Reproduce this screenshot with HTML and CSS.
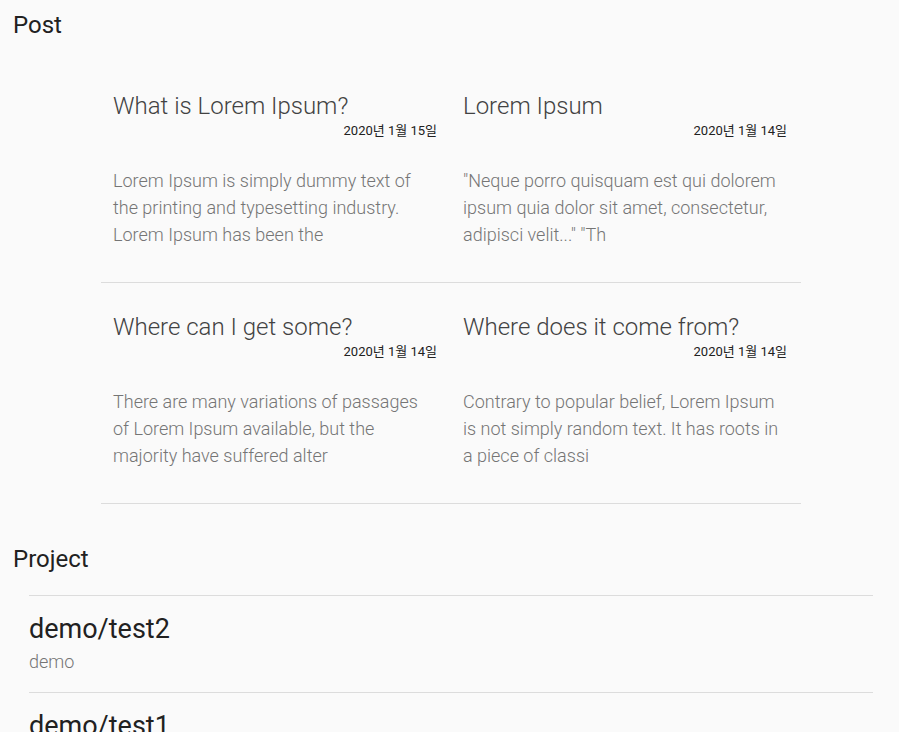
FILE: index.html
```html
<!DOCTYPE html>
<html lang="ko">
<head>
<meta charset="utf-8">
<title>Post</title>
<link rel="stylesheet" href="styles.css">
</head>
<body>
<main class="page">
  <h2 class="section-title">Post</h2>
  <div class="posts">
    <article class="post">
      <h3 class="post-title">What is Lorem Ipsum?</h3>
      <div class="post-date">2020년 1월 15일</div>
      <p class="post-body">Lorem Ipsum is simply dummy text of the printing and typesetting industry. Lorem Ipsum has been the</p>
    </article>
    <article class="post">
      <h3 class="post-title">Lorem Ipsum</h3>
      <div class="post-date">2020년 1월 14일</div>
      <p class="post-body">"Neque porro quisquam est qui dolorem ipsum quia dolor sit amet, consectetur, adipisci velit..." "Th</p>
    </article>
    <article class="post">
      <h3 class="post-title">Where can I get some?</h3>
      <div class="post-date">2020년 1월 14일</div>
      <p class="post-body">There are many variations of passages of Lorem Ipsum available, but the majority have suffered alter</p>
    </article>
    <article class="post">
      <h3 class="post-title">Where does it come from?</h3>
      <div class="post-date">2020년 1월 14일</div>
      <p class="post-body">Contrary to popular belief, Lorem Ipsum is not simply random text. It has roots in a piece of classi</p>
    </article>
  </div>
  <h2 class="section-title project-heading">Project</h2>
  <ul class="projects">
    <li class="project">
      <div class="project-name">demo/test2</div>
      <div class="project-owner">demo</div>
    </li>
    <li class="project">
      <div class="project-name">demo/test1</div>
      <div class="project-owner">demo</div>
    </li>
  </ul>
</main>
</body>
</html>
```
FILE: styles.css
```css
html, body {
  margin: 0;
  padding: 0;
  background: #fafafa;
}
body {
  font-family: Roboto, "Noto Sans CJK KR", sans-serif;
  color: #212121;
  overflow: hidden;
}
.page {
  padding: 0 13px;
}
.section-title {
  margin: 0;
  font-size: 24px;
  font-weight: 400;
  line-height: 50px;
  color: #212121;
}
.posts {
  display: grid;
  grid-template-columns: 350px 350px;
  width: 700px;
  margin: 12px 0 0 88px;
}
.post {
  padding: 28px 14px 34px 12px;
  border-bottom: 1px solid #dcdcdc;
}
.post-title {
  margin: 0;
  font-size: 24px;
  font-weight: 300;
  line-height: 32px;
  color: #424242;
}
.post-date {
  text-align: right;
  font-family: Roboto, "Noto Sans CJK KR", sans-serif;
  font-size: 13px;
  line-height: 18px;
  color: #212121;
}
.post-body {
  margin: 27px 0 0 0;
  font-size: 18px;
  font-weight: 300;
  line-height: 27px;
  color: #757575;
}
.project-heading {
  margin-top: 30px;
}
.projects {
  list-style: none;
  margin: 11px 13px 0 16px;
  padding: 0;
}
.project {
  border-top: 1px solid #dcdcdc;
  padding: 16px 0 14px 0;
}
.project-name {
  font-size: 27px;
  font-weight: 400;
  line-height: 34px;
  color: #212121;
}
.project-owner {
  font-size: 18px;
  font-weight: 300;
  line-height: 32px;
  color: #757575;
}
```
